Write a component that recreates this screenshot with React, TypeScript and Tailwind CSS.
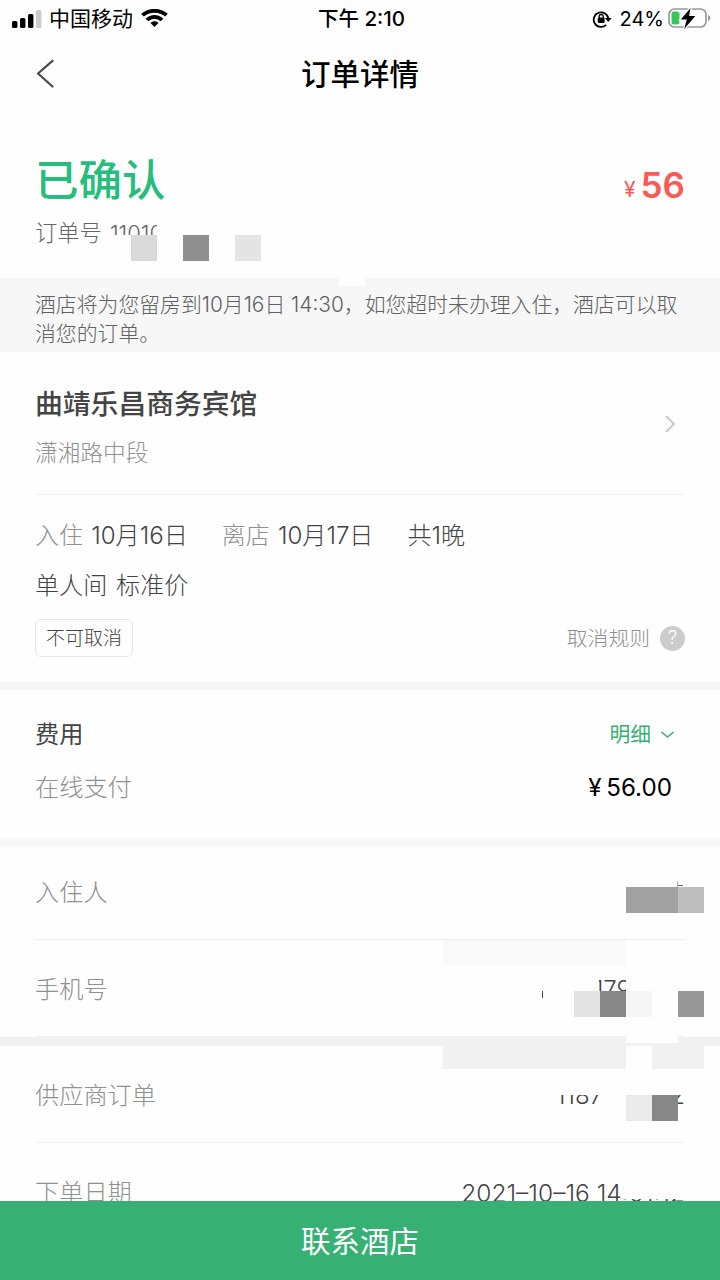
import React from "react";

interface MaskProps {
  className: string;
}

// Block that hides a part of a private value
const Mask = ({ className }: MaskProps) => <span className={`absolute ${className}`} />;

interface InfoRowProps {
  label: string;
  className?: string;
  children?: React.ReactNode;
}

const InfoRow = ({ label, className = "", children }: InfoRowProps) => (
  <div className={`relative mx-[35px] flex justify-between text-2xl leading-9 ${className}`}>
    <span className="text-[24.200px] text-[#909090]">{label}</span>
    {children}
  </div>
);

function StatusBar() {
  return (
    <div className="grid h-[38px] grid-cols-3 items-center pl-3 pr-[9px] text-black">
      <div className="flex items-center">
        <svg className="h-[19px] w-[30px]" viewBox="0 0 30 19">
          <rect x="0" y="11" width="5.4" height="7" rx="1.6" />
          <rect x="8" y="8" width="5.4" height="10" rx="1.6" />
          <rect x="16" y="4" width="5.4" height="14" rx="1.6" />
          <rect x="24" y="0" width="5.4" height="18" rx="1.6" fill="#cccccc" />
        </svg>
        <span className="ml-[7px] text-[21px] font-normal leading-[38px]">中国移动</span>
        <svg className="ml-2 h-5 w-[27px]" viewBox="0 0 27 20" fill="none" stroke="black" strokeWidth="3.700">
          <path d="M1.500 6.200C8 .300 19 .300 25.500 6.200" />
          <path d="M6 11c4.300-4.100 10.700-4.100 15 0" />
          <path d="M13.500 18l-4-4c2.200-2.200 5.800-2.200 8 0z" fill="black" stroke="none" />
        </svg>
      </div>
      <div className="text-center text-[20.500px] font-medium leading-[38px]">下午 2:10</div>
      <div className="flex items-center justify-end">
        <svg className="h-5 w-5" viewBox="0 0 20 20" fill="none" stroke="black" strokeWidth="1.800">
          <path d="M14.200 15.800A7.300 7.300 0 1 1 16.300 10" />
          <path d="M12.900 9h6.800l-3.400 4z" fill="black" stroke="none" />
          <rect x="5.800" y="8.500" width="6.800" height="5.500" rx="1" fill="black" stroke="none" />
          <path d="M7.200 9V7.500a2 2 0 0 1 4 0V9" strokeWidth="1.300" />
        </svg>
        <span className="ml-2 text-[20px] font-normal leading-[38px]">24%</span>
        <svg className="ml-1 h-[22px] w-[43px]" viewBox="0 0 43 22">
          <rect x="1" y="1" width="37" height="18" rx="5.500" fill="none" stroke="#999999" strokeWidth="1.700" />
          <path d="M40 7c3 1 3 5 0 6z" fill="#999999" />
          <rect x="3.500" y="3.500" width="8" height="13" rx="2.500" fill="#35c759" />
          <path d="M22.500 0L12.800 11.500h6L16.200 21 27.300 8h-6.200z" fill="black" stroke="white" strokeWidth="2.500" paintOrder="stroke" />
        </svg>
      </div>
    </div>
  );
}

function NavBar() {
  return (
    <header className="grid h-[72px] grid-cols-3 items-center px-9">
      <svg className="h-[30px] w-5" viewBox="0 0 20 30" fill="none" stroke="#4a4a4a" strokeWidth="2.300" strokeLinecap="round" strokeLinejoin="round">
        <path d="M16.500 1.800L2 14.500l14.500 13" />
      </svg>
      <h1 className="pt-px text-center text-[29.500px] font-medium text-black">订单详情</h1>
    </header>
  );
}

export default function App() {
  return (
    <div className="flex h-[1280px] w-[720px] flex-col overflow-hidden bg-[#fefefe] font-['Inter','Noto_Sans_CJK_SC',sans-serif] font-light text-[#444444]">
      <StatusBar />
      <NavBar />

      <main className="min-h-0 flex-1 overflow-hidden">
        {/* Order status */}
        <section className="relative h-[168px] px-[35px] pt-10">
          <div className="flex items-center justify-between">
            <h2 className="text-[43.500px] font-medium leading-[58px] text-[#26bd7d]">已确认</h2>
            <div className="mt-[11px] flex items-baseline font-semibold text-[#f95a57]">
              <span className="relative -top-px mr-[5px] text-[21px] font-normal">¥</span>
              <span className="text-[35px] leading-[48px]">56</span>
            </div>
          </div>
          <div className="mt-2 flex h-8 text-[22.300px] leading-8 text-[#666666]">
            <span>订单号</span>
            <span className="ml-2 whitespace-nowrap text-[22px]">11010</span>
          </div>
          <Mask className="left-[109px] top-[125px] h-6 w-[74px] bg-[#fefefe]" />
          <Mask className="left-[157px] top-[105px] h-6 w-5 bg-[#fefefe]" />
          <Mask className="left-[130.500px] top-[125px] size-[26px] bg-[#dadada]" />
          <Mask className="left-[183px] top-[125px] size-[26px] bg-[#8f8f8f]" />
          <Mask className="left-[235px] top-[125px] size-[26px] bg-[#e4e4e4]" />
        </section>

        {/* Room holding notice */}
        <section className="relative h-[74px] bg-[#f7f7f7] px-[35px] pt-[12px] text-[20.850px] leading-[29px] text-[#606060]">
          <Mask className="left-[339px] top-0 h-2 w-[26px] bg-[#fefefe]" />
          <p className="whitespace-nowrap">酒店将为您留房到10月16日 14:30，如您超时未办理入住，酒店可以取</p>
          <p>消您的订单。</p>
        </section>

        {/* Hotel */}
        <section className="mx-[35px] flex h-[143px] items-center justify-between border-b border-[#f0f0f0]">
          <div className="pt-[6px]">
            <h3 className="text-[27.800px] font-medium leading-10 text-[#444444]">曲靖乐昌商务宾馆</h3>
            <p className="mt-[13px] text-[22.700px] leading-8 text-[#909090]">潇湘路中段</p>
          </div>
          <svg className="mr-[9px] mt-[2px] h-[18px] w-3" viewBox="0 0 12 18" fill="none" stroke="#c8c8c8" strokeWidth="2">
            <path d="M2 1l8 8-8 8" />
          </svg>
        </section>

        {/* Room and dates */}
        <section className="h-[187px] px-[35px] pt-[23px] text-[24.100px] leading-9">
          <div className="flex">
            <span className="text-[#909090]">入住</span>
            <span className="ml-2">10月16日</span>
            <span className="ml-[34px] text-[#909090]">离店</span>
            <span className="ml-2">10月17日</span>
            <span className="ml-[34px]">共1晚</span>
          </div>
          <div className="mt-[14px] [word-spacing:2px]">单人间 标准价</div>
          <div className="mt-[15px] flex items-center justify-between">
            <span className="h-[38px] rounded-md border border-[#e9e9e9] px-[10px] text-[19px] leading-[38px]">不可取消</span>
            <div className="flex items-center text-[20.800px] leading-9 text-[#909090]">
              <span className="pt-[2px]">取消规则</span>
              <span className="ml-[10px] flex size-[25px] items-center justify-center rounded-full bg-[#cccccc] text-[19px] text-white">?</span>
            </div>
          </div>
        </section>

        {/* Fees */}
        <section className="h-[165px] border-y-8 border-[#f7f7f7] px-[35px] pt-[27px] text-[24.200px] leading-9">
          <div className="flex justify-between">
            <h3 className="font-normal">费用</h3>
            <button className="mr-[11px] flex items-center text-[20.800px] font-normal text-[#37b073]">
              明细
              <svg className="ml-[10px] h-2 w-[13px]" viewBox="0 0 13 8" fill="none" stroke="currentColor" strokeWidth="1.600">
                <path d="M.5 1l6 5 6-5" />
              </svg>
            </button>
          </div>
          <div className="mt-[17px] flex justify-between">
            <span className="text-[#909090]">在线支付</span>
            <span className="mr-[13px] font-normal text-black [word-spacing:-2px]">¥ 56.00</span>
          </div>
        </section>

        {/* Guest */}
        <section>
          <InfoRow label="入住人" className="h-[93px] border-b border-[#f0f0f0] pt-[28px]">
            <Mask className="right-[7px] top-[34px] h-[6px] w-px bg-[#aaaaaa]" />
            <Mask className="right-[2px] top-[38px] h-px w-[5px] bg-[#666666]" />
            <Mask className="right-[7px] top-10 h-[26px] w-[52px] bg-[#a1a1a1]" />
            <Mask className="-right-[19px] top-10 size-[26px] bg-[#bebebe]" />
          </InfoRow>
          <InfoRow label="手机号" className="h-[96px] pt-[32px]">
            <span className="mr-[54px] whitespace-nowrap text-[24px]">179</span>
            <Mask className="right-[39px] top-[25px] h-[40px] w-5 bg-[#fefefe]" />
            <Mask className="right-[86px] top-[25px] h-[40px] w-5 bg-[#fefefe]" />
            <Mask className="right-[59px] top-0 h-[25px] w-[183px] bg-[#f9f9f9]" />
            <Mask className="right-[142px] top-[51px] h-[7px] w-[1.500px] bg-[#4a4a4a]" />
            <Mask className="right-[85px] top-[51px] size-[26px] bg-[#e3e3e3]" />
            <Mask className="right-[59px] top-[51px] size-[26px] bg-[#878787]" />
            <Mask className="right-[33px] top-[51px] size-[26px] bg-[#f6f6f6]" />
            <Mask className="-right-[19px] top-[51px] size-[26px] bg-[#979797]" />
          </InfoRow>
        </section>

        {/* Supplier order */}
        <section>
          <div className="relative h-[10px] bg-[#f1f1f1]">
            <Mask className="left-0 top-0 h-px w-[35px] bg-[#fefefe]" />
            <Mask className="right-0 top-0 h-px w-[35px] bg-[#fefefe]" />
            <Mask className="right-[42px] top-0 h-[7px] w-[52px] bg-[#fefefe]" />
          </div>
          <InfoRow label="供应商订单" className="h-[97px] border-b border-[#f0f0f0] pt-[32px]">
            <span className="mr-[82px]">1187</span>
            <span className="absolute right-0 top-8">2</span>
            <Mask className="right-0 top-[30px] h-[19px] w-[150px] bg-[#fefefe]" />
            <Mask className="right-[59px] top-0 h-[23px] w-[183px] bg-[#f1f1f1]" />
            <Mask className="-right-[19px] top-0 h-[23px] w-[52px] bg-[#f1f1f1]" />
            <Mask className="right-[33px] top-[49px] size-[26px] bg-[#ebebeb]" />
            <Mask className="right-[7px] top-[49px] size-[26px] bg-[#878787]" />
          </InfoRow>
          <InfoRow label="下单日期" className="pt-8">
            <span className="text-[24.500px]">2021–10–16 14:01:12</span>
            <Mask className="right-0 top-8 h-[24px] w-[61px] bg-[#fefefe]" />
          </InfoRow>
        </section>
      </main>

      <button className="h-[79px] shrink-0 bg-[#37b073] pt-px text-[29.500px] font-normal text-white">联系酒店</button>
    </div>
  );
}
